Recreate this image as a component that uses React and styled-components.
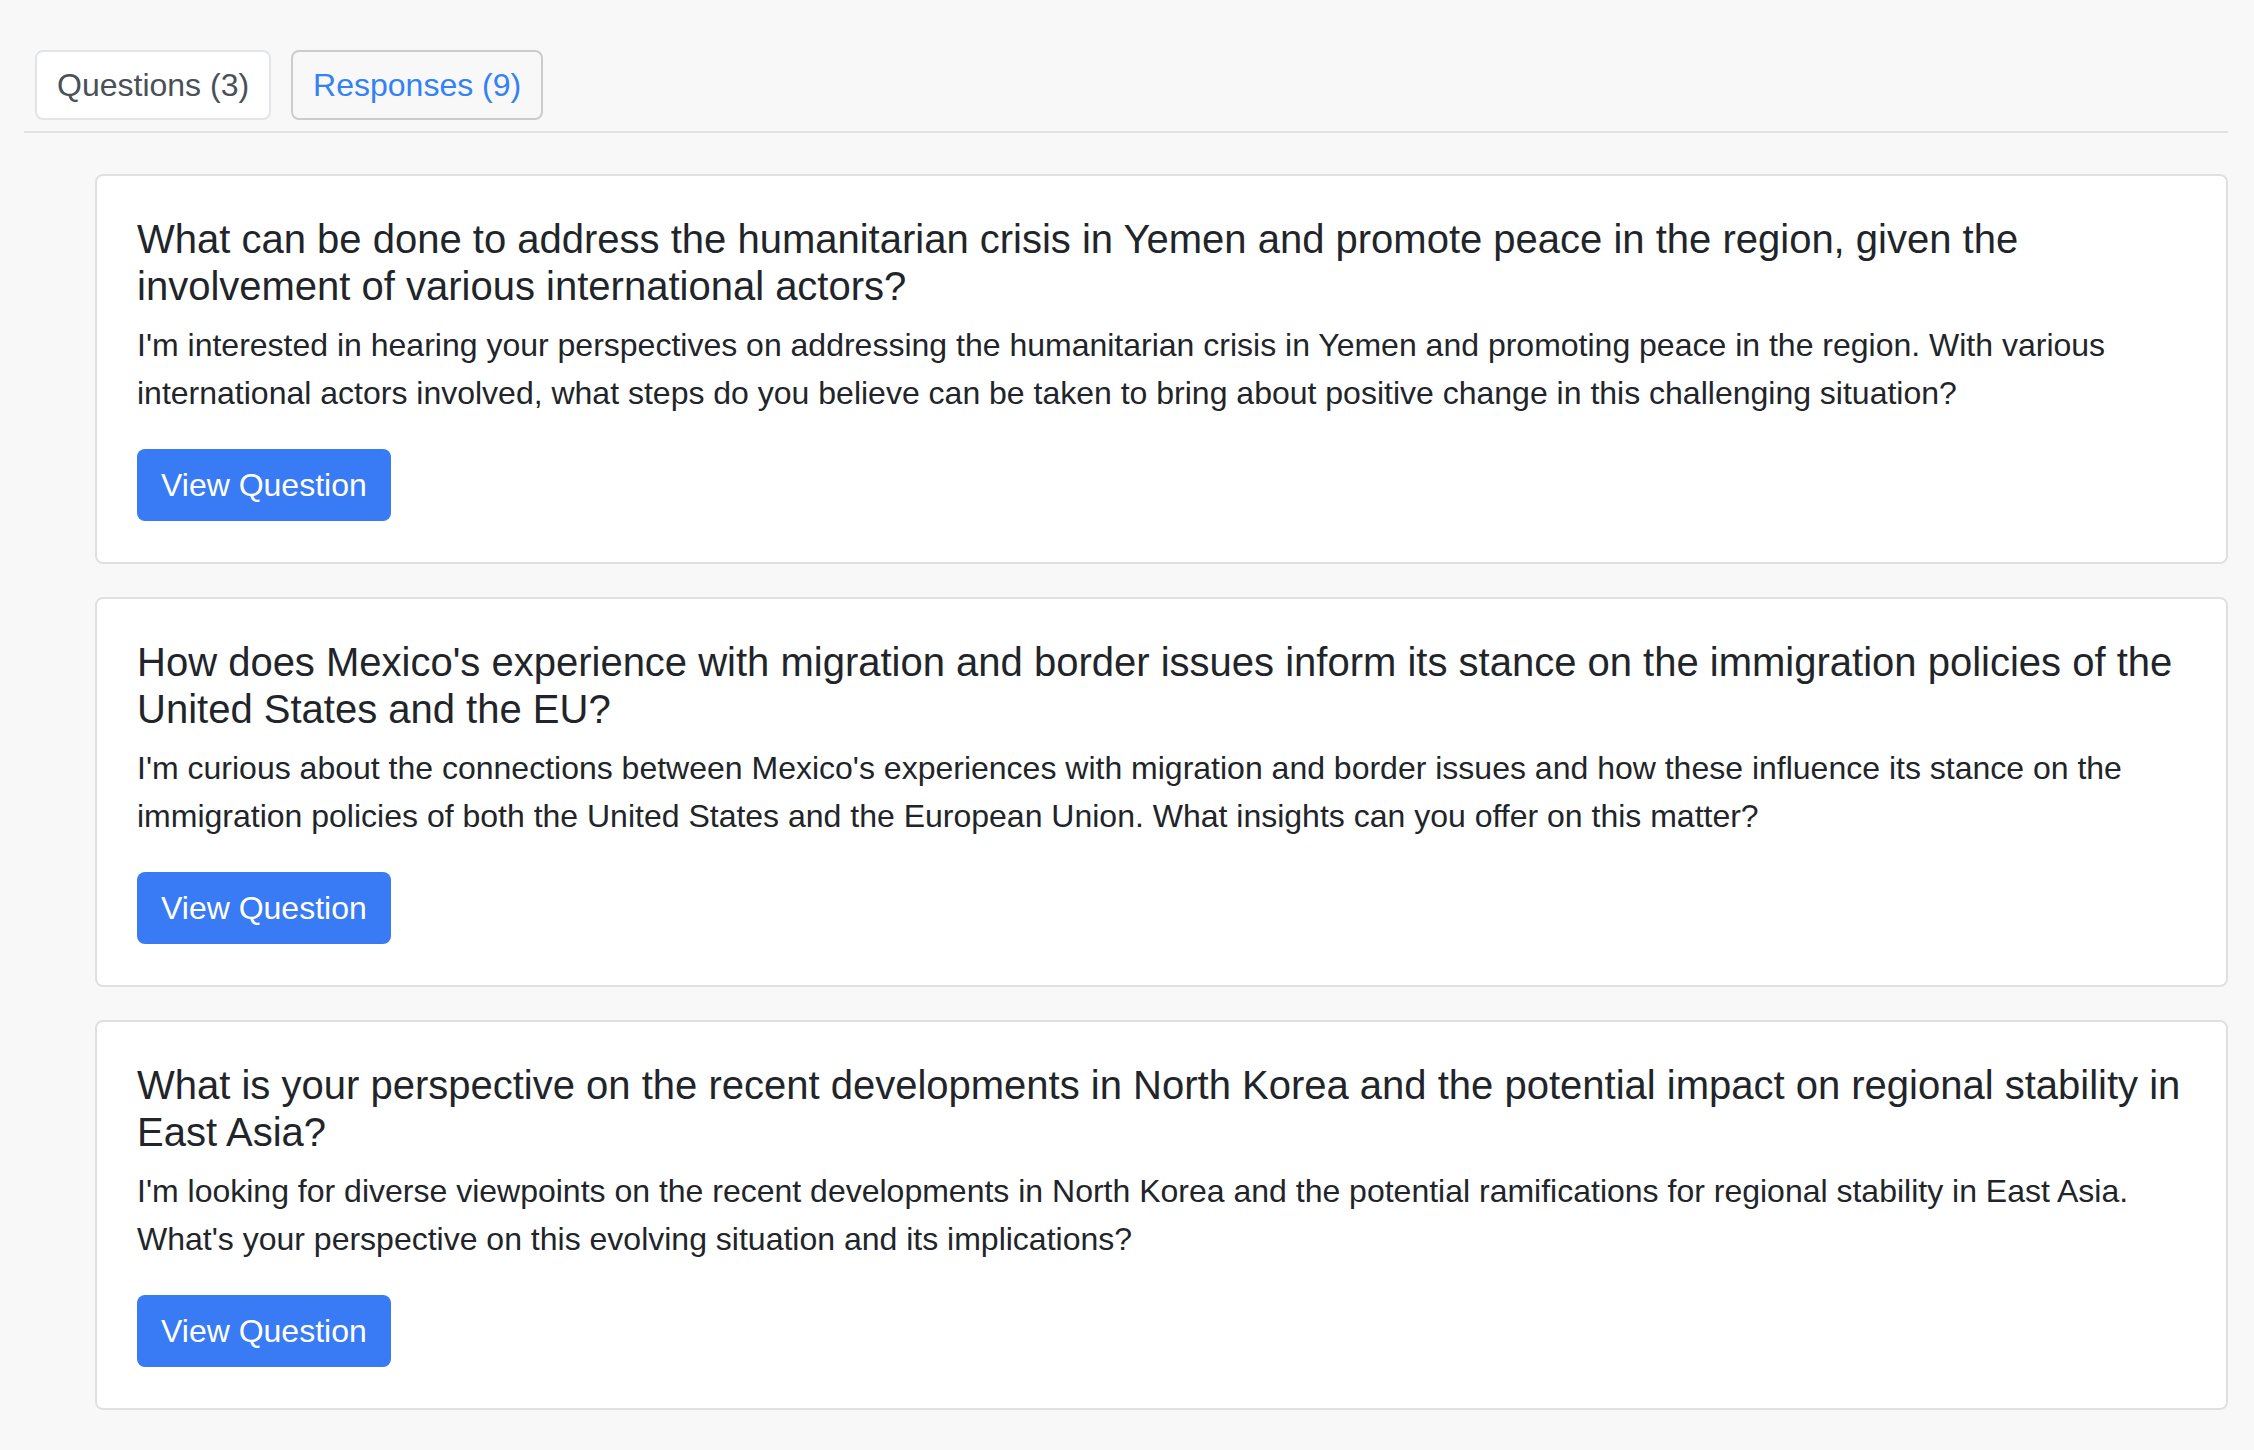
import React from "react";
import styled, { createGlobalStyle } from "styled-components";

const GlobalStyle = createGlobalStyle`
  html, body {
    margin: 0;
    padding: 0;
    background: #f8f8f8;
  }
  body {
    font-family: "Liberation Sans", Arial, Helvetica, sans-serif;
    color: #212529;
  }
  * { box-sizing: border-box; }
`;

const Page = styled.div`
  padding: 50px 26px 40px 0;
  min-height: 1450px;
`;

const TabBar = styled.nav`
  display: flex;
  gap: 20px;
  margin-left: 24px;
  padding: 0 0 11px 11px;
  border-bottom: 2px solid #e0e3e6;
`;

const Tab = styled.button`
  font-family: inherit;
  font-size: 32px;
  line-height: 38px;
  height: 70px;
  padding: 0 20px;
  border-radius: 8px;
  cursor: pointer;
  border: 2px solid ${(p) => (p.$active ? "#e2e5e8" : "#cccccc")};
  background: ${(p) => (p.$active ? "#ffffff" : "transparent")};
  color: ${(p) => (p.$active ? "#495057" : "#3381f6")};
`;

const List = styled.div`
  display: flex;
  flex-direction: column;
  gap: 33px;
  margin: 41px 0 0 95px;
`;

const Card = styled.article`
  background: #ffffff;
  border: 2px solid #e0e0e0;
  border-radius: 8px;
  padding: 40px 40px 41px;
`;

const Title = styled.h5`
  margin: 0 0 11px;
  font-size: 40px;
  line-height: 47px;
  font-weight: 400;
  color: #212529;
`;

const Text = styled.p`
  margin: 0 0 32px;
  font-size: 32px;
  line-height: 48px;
  color: #212529;
`;

const Button = styled.button`
  font-family: inherit;
  font-size: 32px;
  line-height: 48px;
  height: 72px;
  padding: 0 24px;
  border: none;
  border-radius: 8px;
  background: #387bf5;
  color: #ffffff;
  cursor: pointer;
`;

const questions = [
  {
    title:
      "What can be done to address the humanitarian crisis in Yemen and promote peace in the region, given the involvement of various international actors?",
    body:
      "I'm interested in hearing your perspectives on addressing the humanitarian crisis in Yemen and promoting peace in the region. With various international actors involved, what steps do you believe can be taken to bring about positive change in this challenging situation?",
  },
  {
    title:
      "How does Mexico's experience with migration and border issues inform its stance on the immigration policies of the United States and the EU?",
    body:
      "I'm curious about the connections between Mexico's experiences with migration and border issues and how these influence its stance on the immigration policies of both the United States and the European Union. What insights can you offer on this matter?",
  },
  {
    title:
      "What is your perspective on the recent developments in North Korea and the potential impact on regional stability in East Asia?",
    body:
      "I'm looking for diverse viewpoints on the recent developments in North Korea and the potential ramifications for regional stability in East Asia. What's your perspective on this evolving situation and its implications?",
  },
];

export default function App() {
  return (
    <>
      <GlobalStyle />
      <Page>
        <TabBar>
          <Tab $active>Questions (3)</Tab>
          <Tab>Responses (9)</Tab>
        </TabBar>
        <List>
          {questions.map((q, i) => (
            <Card key={i}>
              <Title>{q.title}</Title>
              <Text>{q.body}</Text>
              <Button>View Question</Button>
            </Card>
          ))}
        </List>
      </Page>
    </>
  );
}
